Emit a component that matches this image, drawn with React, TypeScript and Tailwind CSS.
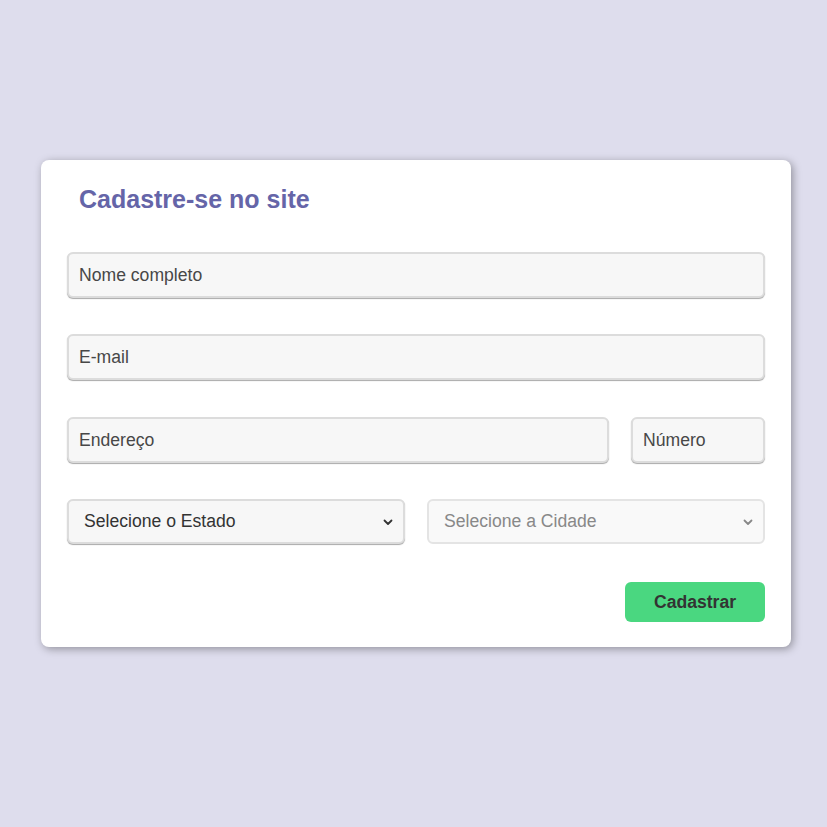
import React from "react";

export default function App() {
  const field =
    "h-[46px] rounded-md border-2 border-[#dcdcdc] bg-[#f7f7f7] px-[10px] text-[17.6px] text-[#474747] placeholder:text-[#474747] shadow-[0_1px_1px_#a9a9a9] outline-none";

  return (
    <div
      className="min-h-screen bg-[#dedded] pt-[160px] pl-[41px]"
      style={{ fontFamily: '"Liberation Sans", Arial, sans-serif' }}
    >
      <form className="flex w-[750px] flex-col rounded-lg bg-white px-[26px] pt-[24px] pb-[25px] shadow-[2px_2px_8px_rgba(0,0,0,0.35)]">
        {/* Title */}
        <h1 className="pl-[12px] text-[25px] font-bold leading-[30px] text-[#6565a8]">
          Cadastre-se no site
        </h1>

        <div className="mt-[38px] flex flex-col gap-[36px]">
          <input type="text" placeholder="Nome completo" className={field} />
          <input type="email" placeholder="E-mail" className={field} />
          <div className="mt-px flex gap-[22px]">
            <input type="text" placeholder="Endereço" className={`${field} min-w-0 flex-1`} />
            <input type="text" placeholder="Número" className={`${field} w-[134px]`} />
          </div>
          <div className="flex gap-[22px]">
            <Select label="Selecione o Estado" />
            <Select label="Selecione a Cidade" disabled />
          </div>
        </div>

        <div className="mt-[38px] flex justify-end">
          <button
            type="button"
            className="h-[40px] w-[140px] rounded-md bg-[#4ad780] text-[17.6px] font-bold text-[#333]"
          >
            Cadastrar
          </button>
        </div>
      </form>
    </div>
  );
}

function Select({ label, disabled = false }: { label: string; disabled?: boolean }) {
  return (
    <div
      className={`flex h-[45px] flex-1 items-center justify-between rounded-md border-2 pl-[15px] pr-[10px] text-[17.6px] ${
        disabled
          ? "border-[#e4e4e4] bg-[#f9f9f9] text-[#888]"
          : "border-[#dcdcdc] bg-[#f7f7f7] text-[#333] shadow-[0_1px_1px_#a9a9a9]"
      }`}
    >
      <span>{label}</span>
      <svg width="10" height="10" viewBox="0 0 10 10" fill="none">
        <path
          d="M1.5 3.5l3.5 3.5 3.5-3.5"
          stroke={disabled ? "#888" : "#333"}
          strokeWidth="1.8"
          strokeLinecap="round"
          strokeLinejoin="round"
        />
      </svg>
    </div>
  );
}
